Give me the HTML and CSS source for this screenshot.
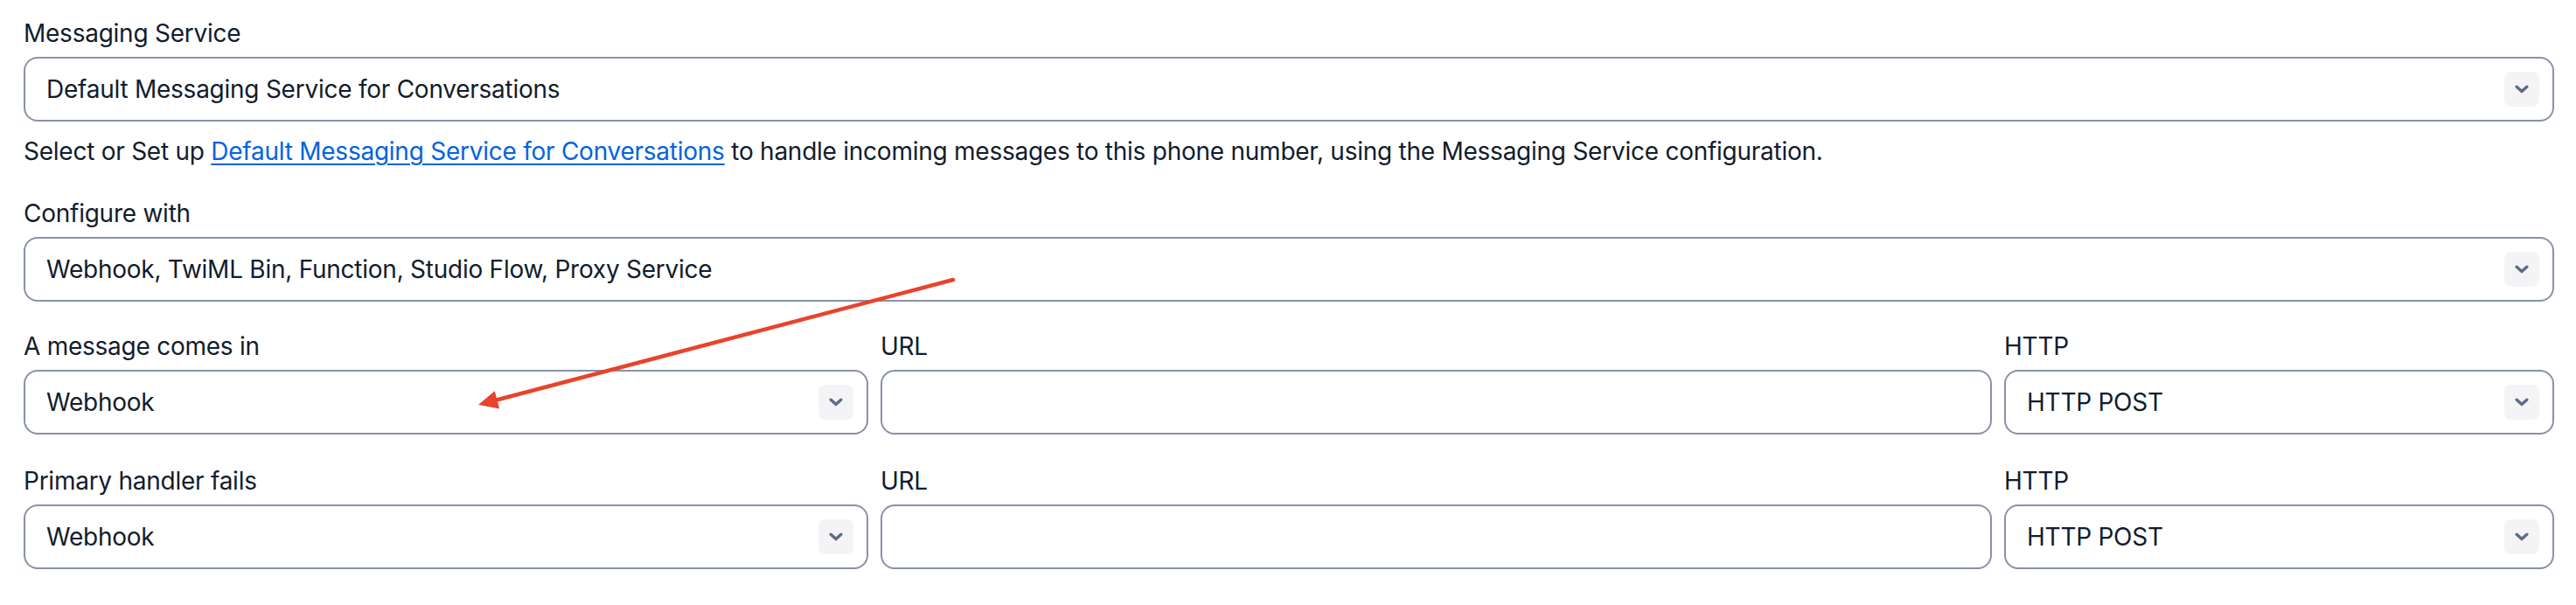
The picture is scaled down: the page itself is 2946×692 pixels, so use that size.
FILE: index.html
```html
<!DOCTYPE html>
<html lang="en">
<head>
<meta charset="utf-8">
<title>Messaging configuration</title>
<link rel="stylesheet" href="styles.css">
</head>
<body>
<div class="page">
  <div class="field">
    <div class="label">Messaging Service</div>
    <div class="select">
      <span class="value">Default Messaging Service for Conversations</span>
      <span class="chev"><svg width="16" height="10" viewBox="0 0 16 10"><path d="M2.2 2.2 L8 7.6 L13.8 2.2" fill="none" stroke="#606b85" stroke-width="3.4" stroke-linecap="round" stroke-linejoin="round"/></svg></span>
    </div>
    <p class="help">Select or Set up <a href="#">Default Messaging Service for Conversations</a> to handle incoming messages to this phone number, using the Messaging Service configuration.</p>
  </div>

  <div class="field field-gap">
    <div class="label">Configure with</div>
    <div class="select">
      <span class="value">Webhook, TwiML Bin, Function, Studio Flow, Proxy Service</span>
      <span class="chev"><svg width="16" height="10" viewBox="0 0 16 10"><path d="M2.2 2.2 L8 7.6 L13.8 2.2" fill="none" stroke="#606b85" stroke-width="3.4" stroke-linecap="round" stroke-linejoin="round"/></svg></span>
    </div>
  </div>

  <div class="row field-gap">
    <div class="field">
      <div class="label">A message comes in</div>
      <div class="select">
        <span class="value">Webhook</span>
        <span class="chev"><svg width="16" height="10" viewBox="0 0 16 10"><path d="M2.2 2.2 L8 7.6 L13.8 2.2" fill="none" stroke="#606b85" stroke-width="3.4" stroke-linecap="round" stroke-linejoin="round"/></svg></span>
      </div>
    </div>
    <div class="field">
      <div class="label">URL</div>
      <div class="input"></div>
    </div>
    <div class="field">
      <div class="label">HTTP</div>
      <div class="select">
        <span class="value">HTTP POST</span>
        <span class="chev"><svg width="16" height="10" viewBox="0 0 16 10"><path d="M2.2 2.2 L8 7.6 L13.8 2.2" fill="none" stroke="#606b85" stroke-width="3.4" stroke-linecap="round" stroke-linejoin="round"/></svg></span>
      </div>
    </div>
  </div>

  <div class="row field-gap field-gap-wide">
    <div class="field">
      <div class="label">Primary handler fails</div>
      <div class="select">
        <span class="value">Webhook</span>
        <span class="chev"><svg width="16" height="10" viewBox="0 0 16 10"><path d="M2.2 2.2 L8 7.6 L13.8 2.2" fill="none" stroke="#606b85" stroke-width="3.4" stroke-linecap="round" stroke-linejoin="round"/></svg></span>
      </div>
    </div>
    <div class="field">
      <div class="label">URL</div>
      <div class="input"></div>
    </div>
    <div class="field">
      <div class="label">HTTP</div>
      <div class="select">
        <span class="value">HTTP POST</span>
        <span class="chev"><svg width="16" height="10" viewBox="0 0 16 10"><path d="M2.2 2.2 L8 7.6 L13.8 2.2" fill="none" stroke="#606b85" stroke-width="3.4" stroke-linecap="round" stroke-linejoin="round"/></svg></span>
      </div>
    </div>
  </div>

  <svg class="annotation" width="2946" height="692" viewBox="0 0 2946 692">
    <line x1="1090" y1="320" x2="566" y2="458" stroke="#e9432b" stroke-width="4.5" stroke-linecap="round"/>
    <polygon points="547,463 565.8,447.2 571.2,467.6" fill="#e9432b"/>
  </svg>
</div>
</body>
</html>
```

FILE: styles.css
```css
* { box-sizing: border-box; }

html, body {
  margin: 0;
  padding: 0;
  background: #ffffff;
}

body {
  font-family: Inter, "Noto Sans", "Liberation Sans", sans-serif;
  font-size: 28px;
  letter-spacing: -0.25px;
  color: #121c2d;
}

.page {
  position: relative;
  padding: 18px 25px 0 27px;
  width: 2946px;
  height: 692px;
}

.field {
  display: flex;
  flex-direction: column;
  min-width: 0;
}

.field-gap {
  margin-top: 31px;
}

.field-gap-wide {
  margin-top: 33px;
}

.label {
  line-height: 40px;
  height: 40px;
  margin-bottom: 7px;
  font-weight: 400;
  white-space: nowrap;
}

.select,
.input {
  height: 74px;
  border: 2px solid #8891aa;
  border-radius: 16px;
  background: #ffffff;
  display: flex;
  align-items: center;
  padding: 0 15px 0 24px;
}

.value {
  flex: 1;
  line-height: 40px;
  white-space: nowrap;
  overflow: hidden;
}

.chev {
  width: 40px;
  height: 40px;
  border-radius: 8px;
  background: #f4f4f6;
  display: flex;
  align-items: center;
  justify-content: center;
  flex: none;
}

.chev svg { display: block; }

.help {
  margin: 14px 0 0;
  line-height: 40px;
  white-space: nowrap;
}

.help a {
  color: #0263e0;
  text-decoration: underline;
  text-underline-offset: 4px;
  text-decoration-thickness: 2px;
}

.row {
  display: grid;
  grid-template-columns: 966px 1fr 629px;
  column-gap: 14px;
}

.annotation {
  position: absolute;
  left: 0;
  top: 0;
  pointer-events: none;
}
```
